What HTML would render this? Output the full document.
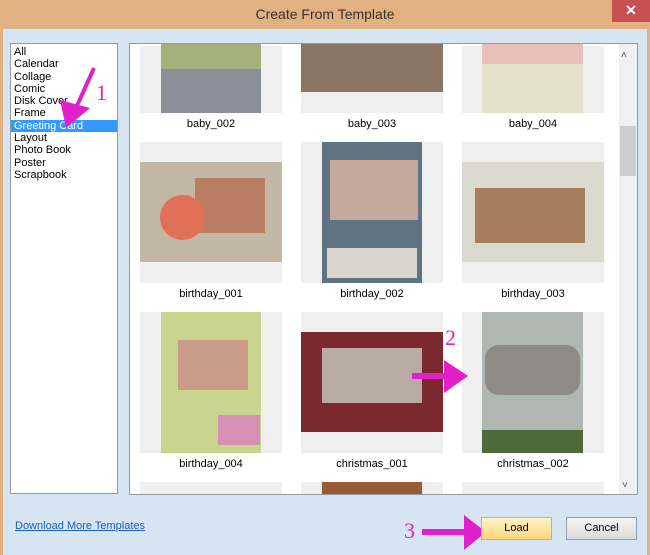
<!DOCTYPE html>
<html><head><meta charset="utf-8"><style>
*{margin:0;padding:0;box-sizing:border-box}
body{width:650px;height:555px;overflow:hidden;background:#d7e4f2;font-family:"Liberation Sans",sans-serif;font-size:11px;position:relative}
.a{position:absolute}
.t{background:#efefef}
.lbl{position:absolute;width:160px;text-align:center;font-size:11px;color:#000}
.li{height:12.3px;line-height:12.3px;padding-left:3px;font-size:11px}
</style></head><body>
<div class="a" style="left:0;top:0;width:650px;height:29px;background:#e2b182"></div>
<div class="a" style="left:0;top:0;width:3px;height:555px;background:#e2b182"></div>
<div class="a" style="left:647px;top:29px;width:3px;height:526px;background:#e2b182"></div>
<div class="a" style="left:0;top:6px;width:650px;text-align:center;font-size:14px;color:#333">Create From Template</div>
<div class="a" style="left:612px;top:0;width:38px;height:22px;background:#c75050;color:#fff;text-align:center;line-height:21px;font-size:14px;font-weight:bold">✕</div>

<div class="a" style="left:10px;top:43px;width:108px;height:451px;background:#fff;border:1px solid #999;padding-top:2px">
<div class="li">All</div><div class="li">Calendar</div><div class="li">Collage</div><div class="li">Comic</div><div class="li">Disk Cover</div><div class="li">Frame</div>
<div class="li" style="background:#3399ff;color:#fff">Greeting Card</div>
<div class="li">Layout</div><div class="li">Photo Book</div><div class="li">Poster</div><div class="li">Scrapbook</div>
</div>

<div class="a" style="left:129px;top:43px;width:509px;height:452px;background:#fff;border:1px solid #999;overflow:hidden">
<div class="a" style="left:489px;top:0;width:18px;height:450px;background:#f0f0f0"></div>
<div class="a" style="left:490px;top:82px;width:16px;height:50px;background:#cdcdcd"></div>
<div class="a" style="left:491px;top:6px;font-size:10px;color:#555">˄</div>
<div class="a" style="left:492px;top:436px;font-size:10px;color:#555">˅</div>
</div>
<!-- row1 -->
<div class="a t" style="left:140px;top:46px;width:142px;height:67px"></div>
<div class="a" style="left:161px;top:44px;width:100px;height:69px;background:#8a8f9a"></div>
<div class="a" style="left:161px;top:44px;width:100px;height:25px;background:#a6b07a"></div>
<div class="a t" style="left:301px;top:46px;width:142px;height:67px"></div>
<div class="a" style="left:301px;top:44px;width:142px;height:48px;background:#8b7565"></div>
<div class="a t" style="left:462px;top:46px;width:142px;height:67px"></div>
<div class="a" style="left:482px;top:44px;width:101px;height:69px;background:#e3e2c8"></div>
<div class="a" style="left:482px;top:44px;width:101px;height:20px;background:#e8c0b8"></div>
<div class="lbl" style="left:131px;top:118px">baby_002</div>
<div class="lbl" style="left:292px;top:118px">baby_003</div>
<div class="lbl" style="left:453px;top:118px">baby_004</div>
<!-- row2 -->
<div class="a t" style="left:140px;top:142px;width:142px;height:141px"></div>
<div class="a" style="left:140px;top:162px;width:142px;height:100px;background:#c2b6a4"></div>
<div class="a" style="left:195px;top:178px;width:70px;height:55px;background:#b97e60"></div>
<div class="a" style="left:160px;top:195px;width:45px;height:45px;background:#e07058;border-radius:50%"></div>
<div class="a t" style="left:301px;top:142px;width:142px;height:141px"></div>
<div class="a" style="left:322px;top:142px;width:100px;height:141px;background:#5e7482"></div>
<div class="a" style="left:330px;top:160px;width:88px;height:60px;background:#c2a99a"></div>
<div class="a" style="left:327px;top:248px;width:90px;height:30px;background:#d9d4cc"></div>
<div class="a t" style="left:462px;top:142px;width:142px;height:141px"></div>
<div class="a" style="left:462px;top:162px;width:142px;height:100px;background:#dcdad0"></div>
<div class="a" style="left:475px;top:188px;width:110px;height:55px;background:#a47e5e"></div>
<div class="lbl" style="left:131px;top:288px">birthday_001</div>
<div class="lbl" style="left:292px;top:288px">birthday_002</div>
<div class="lbl" style="left:453px;top:288px">birthday_003</div>
<!-- row3 -->
<div class="a t" style="left:140px;top:312px;width:142px;height:141px"></div>
<div class="a" style="left:161px;top:312px;width:100px;height:141px;background:#c9d48e"></div>
<div class="a" style="left:178px;top:340px;width:70px;height:50px;background:#c99c88"></div>
<div class="a" style="left:218px;top:415px;width:42px;height:30px;background:#d88fb6"></div>
<div class="a t" style="left:301px;top:312px;width:142px;height:141px"></div>
<div class="a" style="left:301px;top:332px;width:142px;height:100px;background:#7c2830"></div>
<div class="a" style="left:322px;top:348px;width:100px;height:55px;background:#b9aca4"></div>
<div class="a t" style="left:462px;top:312px;width:142px;height:141px"></div>
<div class="a" style="left:482px;top:312px;width:101px;height:141px;background:#b0b6b2"></div>
<div class="a" style="left:485px;top:345px;width:95px;height:50px;background:#8e8a86;border-radius:14px"></div>
<div class="a" style="left:482px;top:430px;width:101px;height:23px;background:#4e6a3a"></div>
<div class="lbl" style="left:131px;top:458px">birthday_004</div>
<div class="lbl" style="left:292px;top:458px">christmas_001</div>
<div class="lbl" style="left:453px;top:458px">christmas_002</div>
<!-- row4 -->
<div class="a t" style="left:140px;top:482px;width:142px;height:12px"></div>
<div class="a t" style="left:301px;top:482px;width:142px;height:12px"></div>
<div class="a" style="left:322px;top:482px;width:100px;height:12px;background:#9a5a38"></div>
<div class="a t" style="left:462px;top:482px;width:142px;height:12px"></div>

<!-- annotations -->
<svg class="a" style="left:0;top:0" width="650" height="555">
<path d="M94 68 L76 108" stroke="#e020c8" stroke-width="4" fill="none"/>
<path d="M60 100 L90 108 L66 128 Z" fill="#e020c8"/>
<path d="M412 376 L448 376" stroke="#e020c8" stroke-width="6"/>
<path d="M444 360 L468 376 L444 393 Z" fill="#e020c8"/>
<path d="M422 532 L468 532" stroke="#e020c8" stroke-width="6"/>
<path d="M464 515 L486 532 L464 550 Z" fill="#e020c8"/>
<text x="96" y="100" font-family="Liberation Serif" font-size="22" fill="#e020c8">1</text>
<text x="445" y="345" font-family="Liberation Serif" font-size="22" fill="#e020c8">2</text>
<text x="404" y="538" font-family="Liberation Serif" font-size="22" fill="#e020c8">3</text>
</svg>

<div class="a" style="left:15px;top:520px;font-size:11px;color:#1a5fb4;text-decoration:underline">Download More Templates</div>
<div class="a" style="left:481px;top:517px;width:71px;height:23px;border:1px solid #d8b050;background:linear-gradient(#fff3c8,#fbd77a);text-align:center;line-height:21px;font-size:11px">Load</div>
<div class="a" style="left:566px;top:517px;width:71px;height:23px;border:1px solid #8aa0c0;background:linear-gradient(#f4f4f4,#dcdcdc);text-align:center;line-height:21px;font-size:11px">Cancel</div>
</body></html>
